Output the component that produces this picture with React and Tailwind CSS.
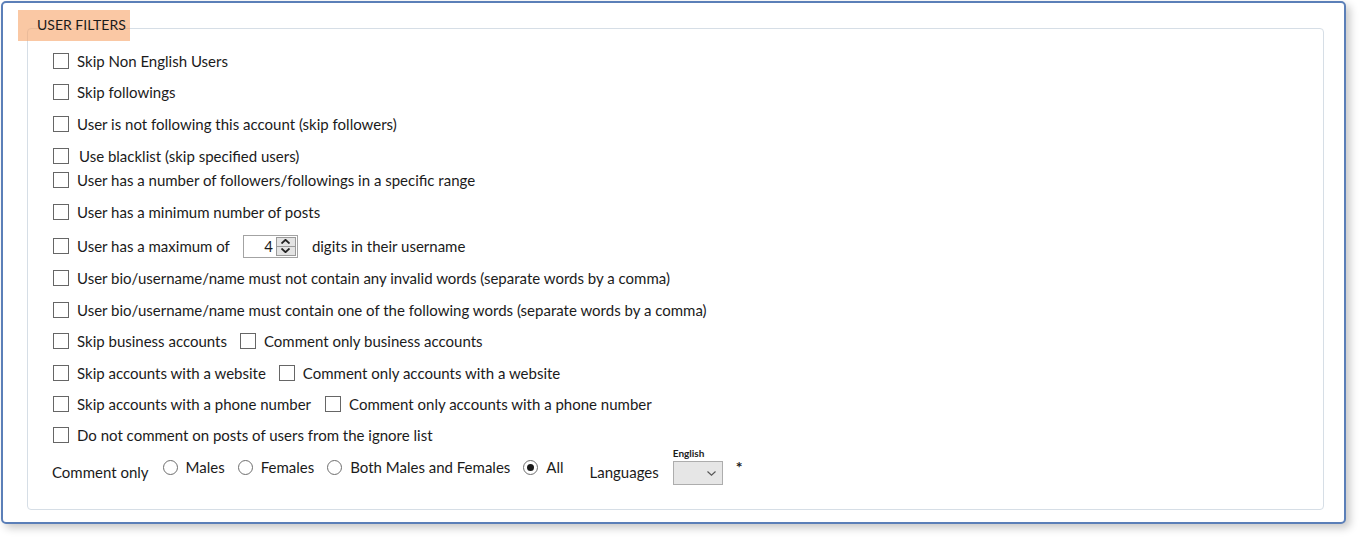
import React from "react";

function Box({ className = "" }) {
  return <span className={"inline-block w-[16px] h-[16px] border border-[#666666] bg-white shrink-0 " + className} />;
}

function Check({ label, textClass = "ml-[8px]" }) {
  return (
    <span className="flex items-center whitespace-nowrap">
      <Box />
      <span className={textClass}>{label}</span>
    </span>
  );
}

function Radio({ label, checked }) {
  return (
    <span className="flex items-center whitespace-nowrap">
      <span className="w-[15px] h-[15px] rounded-full border border-[#6e6e6e] bg-white flex items-center justify-center">
        {checked && <span className="w-[7px] h-[7px] rounded-full bg-[#1a1a1a]" />}
      </span>
      <span className="ml-[8px]">{label}</span>
    </span>
  );
}

function Spinner() {
  return (
    <span className="ml-[13px] flex w-[55px] h-[23px] border border-[#a3a3a3] bg-white">
      <span className="flex-1 text-right pr-[3px] leading-[21px]">4</span>
      <span className="flex flex-col w-[20px] my-[1px] mr-[1px]">
        <span className="flex-1 bg-[#e3e3e3] border border-[#9a9a9a] flex items-center justify-center">
          <svg width="9" height="5" viewBox="0 0 9 5"><path d="M0.5 4.5 L4.5 0.8 L8.5 4.5" fill="none" stroke="#222" strokeWidth="1.8" /></svg>
        </span>
        <span className="flex-1 bg-[#e3e3e3] border border-[#9a9a9a] border-t-0 flex items-center justify-center">
          <svg width="9" height="5" viewBox="0 0 9 5"><path d="M0.5 0.5 L4.5 4.2 L8.5 0.5" fill="none" stroke="#222" strokeWidth="1.8" /></svg>
        </span>
      </span>
    </span>
  );
}

export default function App() {
  return (
    <div
      className="w-[1362px] h-[540px] bg-white text-[15px] text-[#1b1b1b] overflow-hidden"
      style={{ fontFamily: "Lato, 'Noto Sans', sans-serif" }}
    >
      <div className="ml-[1px] mt-[1px] w-[1345px] h-[523px] border-2 border-[#5b7fb8] rounded-[5px] bg-white shadow-[4px_4px_8px_rgba(0,0,0,0.22)] pl-[24px] pt-[25px]">
        <div className="relative w-[1297px] h-[482px] border border-[#d6dee6] rounded-[4px] pl-[25px] pt-[22px]">
          <div className="absolute left-[-10px] top-[-19px] w-[112px] h-[31px] bg-[rgba(246,164,104,0.6)] pl-[19px] pt-[6px] leading-[18px] text-[14px] text-[#1b1b1b] whitespace-nowrap">
            USER FILTERS
          </div>

          <div className="h-[20px] flex items-center"><Check label="Skip Non English Users" /></div>
          <div className="h-[20px] mt-[11px] flex items-center"><Check label="Skip followings" /></div>
          <div className="h-[20px] mt-[12px] flex items-center"><Check label="User is not following this account (skip followers)" /></div>
          <div className="h-[20px] mt-[12px] flex items-center"><Check label="Use blacklist (skip specified users)" textClass="ml-[10px]" /></div>
          <div className="h-[20px] mt-[4px] flex items-center"><Check label="User has a number of followers/followings in a specific range" /></div>
          <div className="h-[20px] mt-[12px] flex items-center"><Check label="User has a minimum number of posts" /></div>
          <div className="h-[20px] mt-[14px] flex items-center">
            <Check label="User has a maximum of" />
            <Spinner />
            <span className="ml-[14px] whitespace-nowrap">digits in their username</span>
          </div>
          <div className="h-[20px] mt-[12px] flex items-center"><Check label="User bio/username/name must not contain any invalid words (separate words by a comma)" /></div>
          <div className="h-[20px] mt-[12px] flex items-center"><Check label="User bio/username/name must contain one of the following words (separate words by a comma)" /></div>
          <div className="h-[20px] mt-[11px] flex items-center gap-[13px]">
            <Check label="Skip business accounts" />
            <Check label="Comment only business accounts" />
          </div>
          <div className="h-[20px] mt-[12px] flex items-center gap-[13px]">
            <Check label="Skip accounts with a website" />
            <Check label="Comment only accounts with a website" />
          </div>
          <div className="h-[20px] mt-[11px] flex items-center gap-[14px]">
            <Check label="Skip accounts with a phone number" />
            <Check label="Comment only accounts with a phone number" />
          </div>
          <div className="h-[20px] mt-[11px] flex items-center"><Check label="Do not comment on posts of users from the ignore list" /></div>

          <div className="mt-[2px] ml-[-1px] flex items-start h-[34px] whitespace-nowrap">
            <span className="mt-[14px]">Comment only</span>
            <span className="ml-[14px] mt-[9px] flex items-center gap-[13px]">
              <Radio label="Males" />
              <Radio label="Females" />
              <Radio label="Both Males and Females" />
              <Radio label="All" checked />
            </span>
            <span className="ml-[26px] mt-[14px]">Languages</span>
            <span className="ml-[14px] flex flex-col">
              <span className="text-[10px] font-bold leading-[12px] h-[12px]">English</span>
              <span className="mt-[2px] w-[50px] h-[24px] bg-[#e6e6e6] border border-[#adadad] flex items-center justify-end pr-[6px]">
                <svg width="9" height="5" viewBox="0 0 9 5"><path d="M0.5 0.5 L4.5 4.2 L8.5 0.5" fill="none" stroke="#555" strokeWidth="1.1" /></svg>
              </span>
            </span>
            <span className="ml-[13px] mt-[8px] font-bold text-[16px]">*</span>
          </div>
        </div>
      </div>
    </div>
  );
}
